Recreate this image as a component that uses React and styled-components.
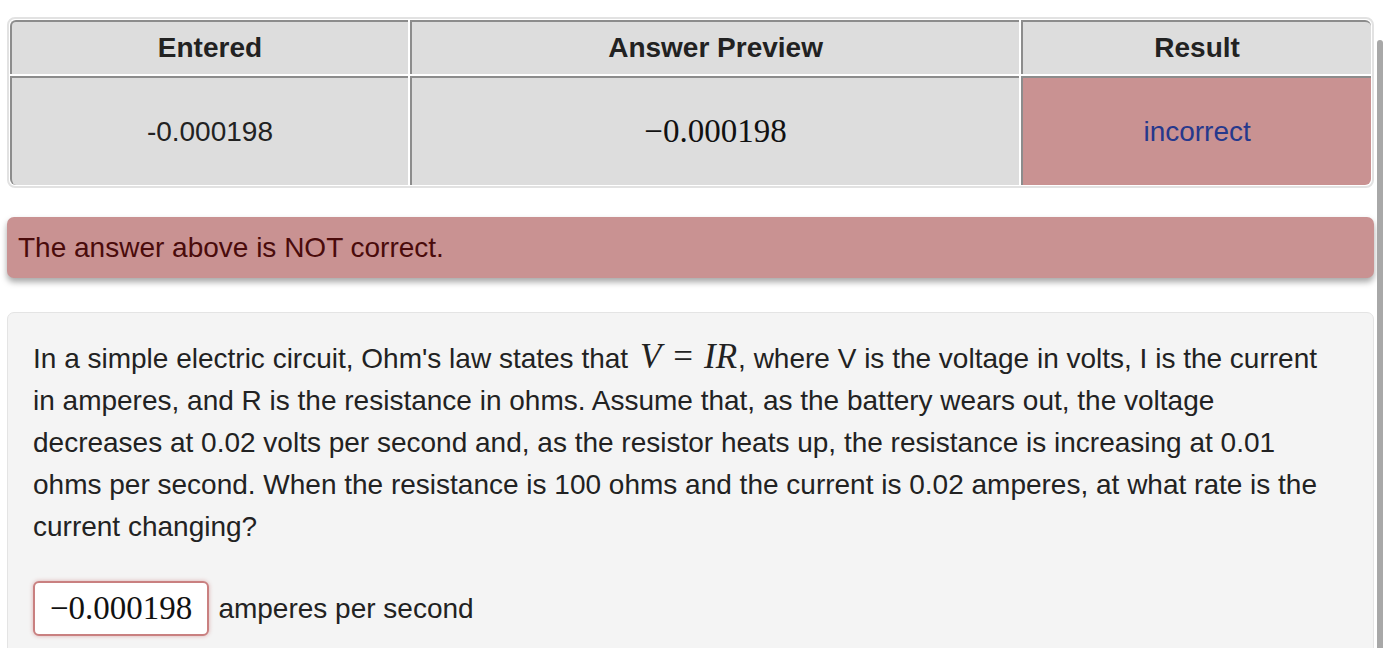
import React from "react";
import styled, { createGlobalStyle } from "styled-components";

const GlobalStyle = createGlobalStyle`
  html, body {
    margin: 0;
    padding: 0;
    background: #ffffff;
    overflow: hidden;
  }
  body {
    font-family: "Liberation Sans", Arial, sans-serif;
    color: #222;
  }
`;

const Page = styled.div`
  padding: 17px 11px 0 7px;
  display: flex;
  flex-direction: column;
`;

const TableFrame = styled.div`
  border: 2px solid #e2e2e2;
  border-radius: 8px;
  padding: 1px;
`;

const Table = styled.table`
  border-collapse: separate;
  border-spacing: 2px;
  margin: -2px;
  width: calc(100% + 4px);
  table-layout: fixed;
`;

const Col = styled.col`
  width: ${({ w }) => w}px;
`;

const Cell = styled.td`
  background: ${({ bad }) => (bad ? "#c99292" : "#dddddd")};
  border-top: 2px solid #8c8c8c;
  border-left: 2px solid #8c8c8c;
  height: ${({ head }) => (head ? 52 : 107)}px;
  padding: 0;
  text-align: center;
  font-size: 28px;
  font-weight: ${({ head }) => (head ? 700 : 400)};
  color: ${({ bad }) => (bad ? "#26388c" : "#222")};
  &:first-child {
    border-top-left-radius: ${({ head }) => (head ? 6 : 0)}px;
    border-bottom-left-radius: ${({ head }) => (head ? 0 : 6)}px;
  }
  &:last-child {
    border-top-right-radius: ${({ head }) => (head ? 6 : 0)}px;
    border-bottom-right-radius: ${({ head }) => (head ? 0 : 6)}px;
  }
`;

const Math = styled.span`
  font-family: "Liberation Serif", "DejaVu Serif", serif;
  font-size: ${({ size }) => size || 33}px;
  color: #111;
`;

const MathVar = styled.i`
  font-family: "Liberation Serif", "DejaVu Serif", serif;
  font-size: 35px;
  font-style: italic;
  margin: 0 ${({ tight }) => (tight ? 1 : 2)}px 0 ${({ lead }) => (lead ? 4 : 1)}px;
`;

const MathOp = styled.span`
  font-family: "Liberation Serif", "DejaVu Serif", serif;
  font-size: 35px;
  margin: 0 10px;
`;

const Alert = styled.div`
  margin-top: 29px;
  background: #c99292;
  color: #4a0b0b;
  border-radius: 7px;
  height: 61px;
  padding: 0 11px;
  display: flex;
  align-items: center;
  font-size: 28px;
  box-shadow: 0 4px 6px rgba(0, 0, 0, 0.35);
`;

const Problem = styled.div`
  margin-top: 34px;
  background: #f4f4f4;
  border: 1px solid #e4e4e4;
  border-radius: 7px;
  padding: 23px 30px 40px 25px;
`;

const Text = styled.p`
  margin: 0;
  font-size: 28px;
  line-height: 42px;
  color: #222;
`;

const AnswerRow = styled.div`
  margin-top: 33px;
  display: flex;
  align-items: center;
  gap: 9px;
  font-size: 28px;
  color: #222;
`;

const AnswerBox = styled.div`
  background: #fff;
  border: 2px solid #c98080;
  border-radius: 6px;
  box-shadow: 0 0 4px rgba(190, 90, 90, 0.45);
  height: 51px;
  padding: 0 15px;
  display: flex;
  align-items: center;
`;

const Scrollbar = styled.div`
  position: fixed;
  right: 2px;
  top: 40px;
  width: 6px;
  height: 620px;
  border-radius: 3px;
  background: #a8a8a8;
`;

const cols = [397, 608, 349];

export default function App() {
  return (
    <>
      <GlobalStyle />
      <Page>
        <TableFrame>
          <Table>
            <colgroup>
              {cols.map((w, i) => (
                <Col key={i} w={w} />
              ))}
            </colgroup>
            <tbody>
              <tr>
                <Cell head>Entered</Cell>
                <Cell head>Answer Preview</Cell>
                <Cell head>Result</Cell>
              </tr>
              <tr>
                <Cell>-0.000198</Cell>
                <Cell>
                  <Math>−0.000198</Math>
                </Cell>
                <Cell bad>incorrect</Cell>
              </tr>
            </tbody>
          </Table>
        </TableFrame>

        <Alert>The answer above is NOT correct.</Alert>

        <Problem>
          <Text>
            In a simple electric circuit, Ohm's law states that{" "}
            <MathVar lead>V</MathVar>
            <MathOp>=</MathOp>
            <MathVar tight>IR</MathVar>, where V is the voltage in volts, I is
            the current in amperes, and R is the resistance in ohms. Assume
            that, as the battery wears out, the voltage decreases at 0.02 volts
            per second and, as the resistor heats up, the resistance is
            increasing at 0.01 ohms per second. When the resistance is 100 ohms
            and the current is 0.02 amperes, at what rate is the current
            changing?
          </Text>
          <AnswerRow>
            <AnswerBox>
              <Math size={33}>−0.000198</Math>
            </AnswerBox>
            amperes per second
          </AnswerRow>
        </Problem>
      </Page>
      <Scrollbar />
    </>
  );
}
